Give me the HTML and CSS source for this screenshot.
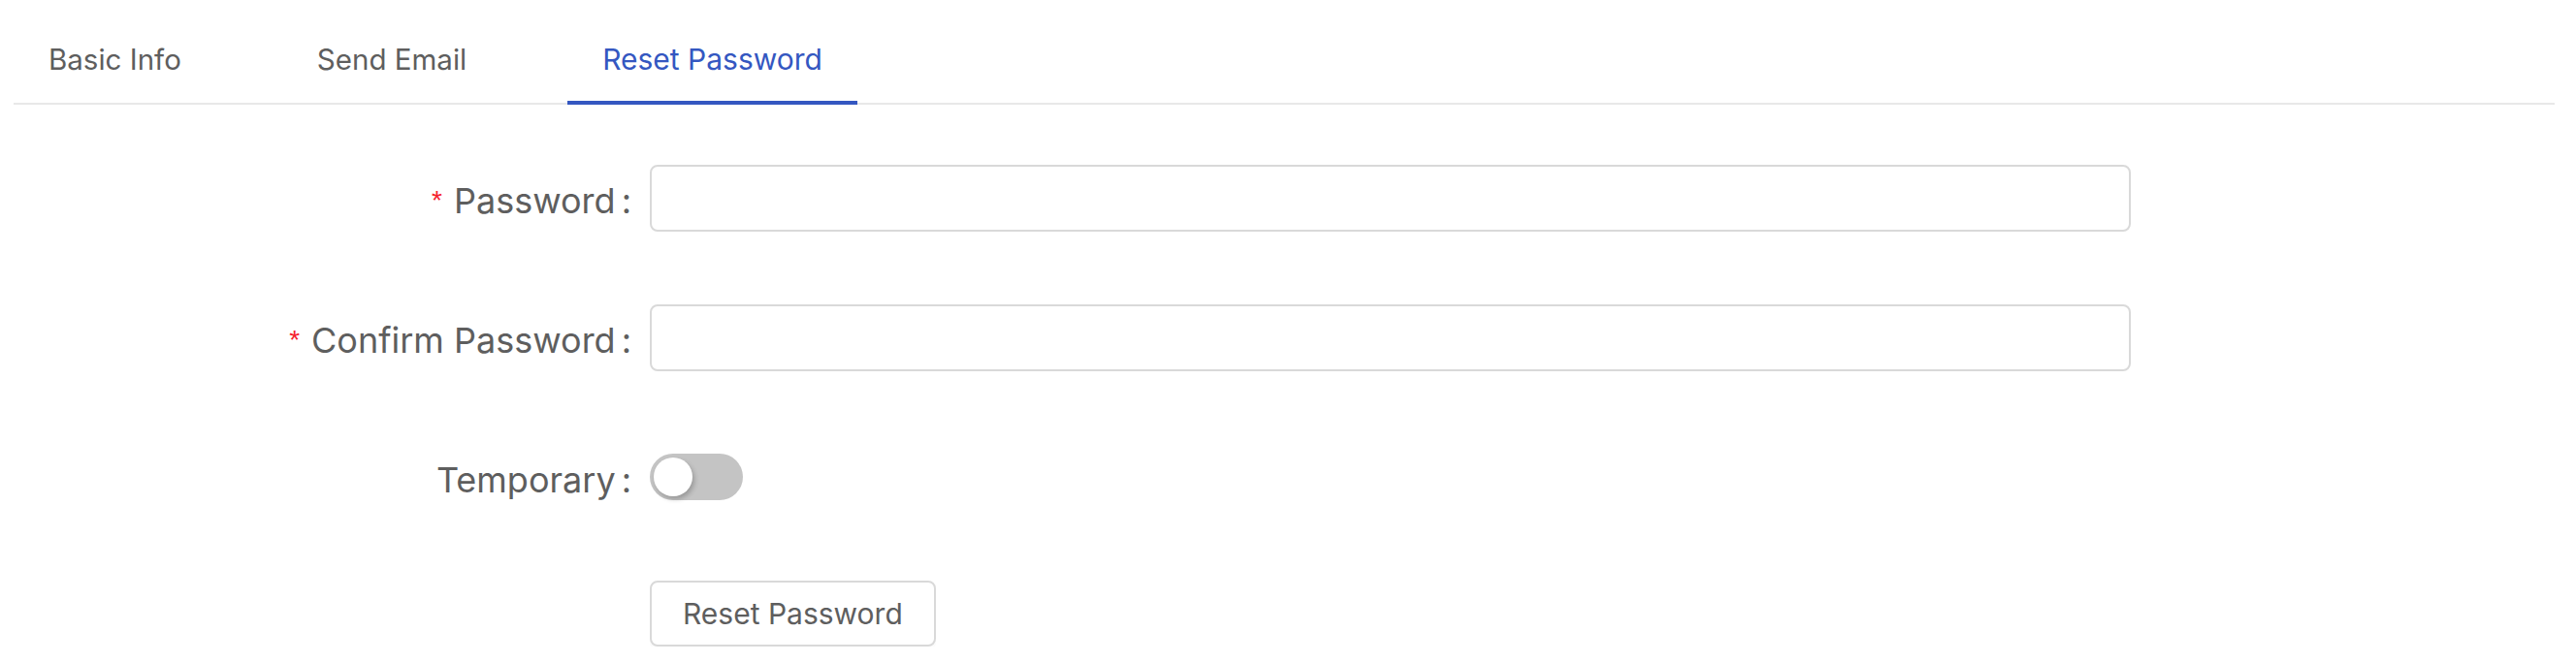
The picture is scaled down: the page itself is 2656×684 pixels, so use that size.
FILE: index.html
```html
<!DOCTYPE html>
<html lang="en">
<head>
<meta charset="utf-8">
<title>Reset Password</title>
<link rel="stylesheet" href="styles.css">
</head>
<body>
<div class="page">
  <div class="tab-nav">
    <div class="tab">Basic Info</div>
    <div class="tab">Send Email</div>
    <div class="tab tab-active">Reset Password<span class="ink-bar"></span></div>
  </div>
  <form class="form">
    <div class="form-row">
      <label class="label"><span class="req">*</span>Password<span class="colon">:</span></label>
      <div class="control"><input class="input" type="password"></div>
    </div>
    <div class="form-row">
      <label class="label"><span class="req">*</span>Confirm Password<span class="colon">:</span></label>
      <div class="control"><input class="input" type="password"></div>
    </div>
    <div class="form-row">
      <label class="label">Temporary<span class="colon">:</span></label>
      <div class="control"><span class="switch"><span class="knob"></span></span></div>
    </div>
    <div class="form-row">
      <div class="label"></div>
      <div class="control"><button type="button" class="btn">Reset Password</button></div>
    </div>
  </form>
</div>
</body>
</html>
```

FILE: styles.css
```css
html, body {
  margin: 0;
  padding: 0;
  background: #ffffff;
}
body {
  font-family: Inter, "Liberation Sans", Arial, sans-serif;
  color: #5e5e5e;
}
.page {
  padding: 8px 22px 0 14px;
}
.tab-nav {
  display: flex;
  gap: 68px;
  padding-top: 31px;
  padding-bottom: 23px;
  border-bottom: 2px solid #e8e8e8;
}
.tab {
  position: relative;
  padding: 0 36px;
  font-size: 29.5px;
  line-height: 44px;
  color: #5e5e5e;
  white-space: nowrap;
}
.tab-active {
  color: #3457c1;
  font-size: 30px;
}
.ink-bar {
  position: absolute;
  left: 0;
  right: 0;
  bottom: -25px;
  height: 4px;
  background: #3457c1;
}
.form {
  margin-top: 59px;
}
.form-row {
  display: grid;
  grid-template-columns: 656px 1527px;
  height: 68px;
  margin-bottom: 76px;
}
.form-row:last-child {
  margin-bottom: 0;
}
.label {
  display: flex;
  align-items: center;
  justify-content: flex-end;
  font-size: 36px;
  line-height: 68px;
  padding-top: 6px;
  box-sizing: border-box;
  color: #5e5e5e;
  white-space: nowrap;
}
.req {
  font-family: "Liberation Sans", Arial, sans-serif;
  font-size: 28px;
  color: #f5222d;
  margin-right: 12px;
}
.colon {
  margin-left: 6px;
  margin-right: 19px;
}
.control {
  display: flex;
  align-items: center;
}
.input {
  box-sizing: border-box;
  width: 100%;
  height: 69px;
  border: 2px solid #d9d9d9;
  border-radius: 8px;
  background: #fff;
  outline: none;
  padding: 0 22px;
  font-size: 28px;
}
.switch {
  position: relative;
  display: inline-block;
  width: 96px;
  height: 48px;
  border-radius: 24px;
  background: #c4c4c4;
}
.knob {
  position: absolute;
  left: 4px;
  top: 4px;
  width: 40px;
  height: 40px;
  border-radius: 50%;
  background: #ffffff;
  box-shadow: 2px 3px 5px rgba(0, 0, 0, 0.22);
}
.btn {
  box-sizing: border-box;
  height: 68px;
  padding: 0 32px;
  border: 2px solid #d9d9d9;
  border-radius: 8px;
  background: #ffffff;
  box-shadow: 0 4px 0 rgba(0, 0, 0, 0.015);
  font-family: Inter, "Liberation Sans", Arial, sans-serif;
  font-size: 30px;
  color: #5e5e5e;
  cursor: pointer;
}
```
